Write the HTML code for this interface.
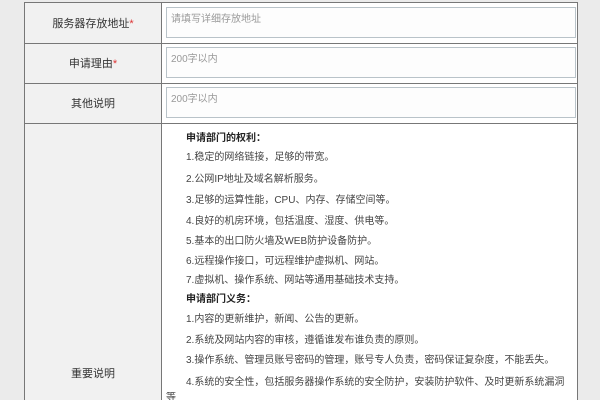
<!DOCTYPE html>
<html style="overflow:hidden;height:400px"><head><meta charset="utf-8"><style>
html,body{overflow:hidden;height:400px}
body{margin:0;width:600px;background:#ebebeb;font-family:"Liberation Sans","Noto Sans CJK SC",sans-serif;position:relative}
.lab{position:absolute;left:24px;width:138px;background:#f1f1f1;border:1px solid #777;box-sizing:border-box;font-size:11px;color:#333;text-align:center}
.cell{position:absolute;left:161px;width:417px;border:1px solid #777;box-sizing:border-box;background:#fff}
.ta{position:absolute;left:166px;width:410px;height:31px;border:1px solid #b9c3c9;box-sizing:border-box;background:#fdfdfd;font-size:10px;color:#999;padding:2px 4px}
.r{color:#d33}
.c{position:absolute;left:186px;font-size:10px;color:#444;white-space:nowrap;line-height:12px}
.b{font-weight:bold;color:#222}
</style></head><body>
<div style="position:absolute;left:24px;top:0;width:554px;height:2px;border-bottom:1px solid #777"></div>
<div class="lab" style="top:2px;height:42px;line-height:42px">服务器存放地址<span class="r">*</span></div>
<div class="cell" style="top:2px;height:42px"></div>
<div class="ta" style="top:7px">请填写详细存放地址</div>
<div class="lab" style="top:43px;height:41px;line-height:41px">申请理由<span class="r">*</span></div>
<div class="cell" style="top:43px;height:41px"></div>
<div class="ta" style="top:47px">200字以内</div>
<div class="lab" style="top:83px;height:41px;line-height:41px">其他说明</div>
<div class="cell" style="top:83px;height:41px"></div>
<div class="ta" style="top:87px">200字以内</div>
<div class="lab" style="top:123px;height:277px;border-bottom:none"><div style="position:absolute;top:241px;width:100%">重要说明</div></div>
<div class="cell" style="top:123px;height:277px;border-bottom:none"></div>
<div class="c b" style="top:133px">申请部门的权利：</div>
<div class="c" style="top:152px">1.稳定的网络链接，足够的带宽。</div>
<div class="c" style="top:174px">2.公网IP地址及域名解析服务。</div>
<div class="c" style="top:195px">3.足够的运算性能，CPU、内存、存储空间等。</div>
<div class="c" style="top:216px">4.良好的机房环境，包括温度、湿度、供电等。</div>
<div class="c" style="top:236px">5.基本的出口防火墙及WEB防护设备防护。</div>
<div class="c" style="top:256px">6.远程操作接口，可远程维护虚拟机、网站。</div>
<div class="c" style="top:275px">7.虚拟机、操作系统、网站等通用基础技术支持。</div>
<div class="c b" style="top:294px">申请部门义务：</div>
<div class="c" style="top:314px">1.内容的更新维护，新闻、公告的更新。</div>
<div class="c" style="top:335px">2.系统及网站内容的审核，遵循谁发布谁负责的原则。</div>
<div class="c" style="top:355px">3.操作系统、管理员账号密码的管理，账号专人负责，密码保证复杂度，不能丢失。</div>
<div class="c" style="top:377px">4.系统的安全性，包括服务器操作系统的安全防护，安装防护软件、及时更新系统漏洞</div>
<div class="c" style="top:392px;left:166px;height:8px;overflow:hidden">等</div>
</body></html>
